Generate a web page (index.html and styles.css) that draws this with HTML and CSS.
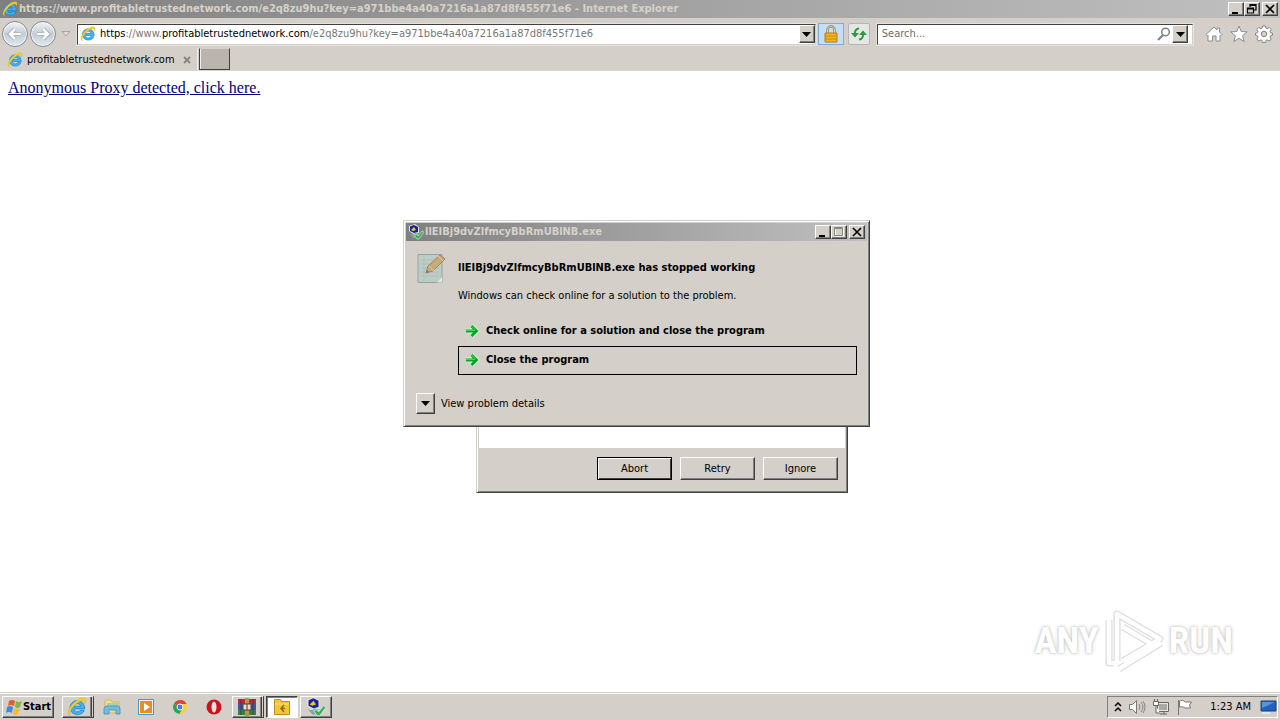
FILE: index.html
```html
<!DOCTYPE html>
<html lang="en">
<head>
<meta charset="utf-8">
<title>Internet Explorer</title>
<link rel="stylesheet" href="styles.css">
</head>
<body>
<svg class="defs" aria-hidden="true">
  <symbol id="ie" viewBox="0 0 16 16">
    <path d="M14.200 9.500H5.500c.2 2.900 4 3 5.200 1.100h3.100c-1.600 5.200-11.200 4.700-11.300-1.900C2.400 1 14.200.6 14.200 9.500ZM5.500 7.300h5.400C10.500 4.700 6 4.500 5.500 7.300Z" fill="#45b0ea" stroke="#1683cb" stroke-width=".6"/>
    <path d="M2.500 14.800C-.8 14 1.600 7.500 6.800 3.500 10.200.8 14.500-.3 15 2.100c.2.900-.2 2-.8 3 .2-2-.9-2.900-3.700-1.700C6 5.300.7 12 2.500 14.800Z" fill="#f6cf25" stroke="#d9a912" stroke-width=".3"/>
  </symbol>
  <symbol id="app" viewBox="0 0 16 16">
    <path d="M1 2 7 0l4 3v6l-6 1-4-3Z" fill="#dfe5e8"/>
    <path d="M2 2.500 6 1l4 2v5L6 9 2 7Z" fill="#17238f"/>
    <path d="m6 3 2 3-3 1-2-1Z" fill="#eec53a"/>
    <path d="M1 9q3 3 6 0l3 1-2 4H5Z" fill="#7ea3ab"/>
    <path d="m6 11 3-1 1 2 4-5 2 1-5 7H9Z" fill="#3fae58" stroke="#c6ead0" stroke-width=".7"/>
  </symbol>
  <symbol id="go" viewBox="0 0 16 16">
    <path d="M2 8h10M7.500 3l5 5-5 5" fill="none" stroke="#cdf3cd" stroke-width="5"/>
    <path d="M2 8h10M7.500 3l5 5-5 5" fill="none" stroke="#0da32a" stroke-width="2.800"/>
    <path d="M2 7.500h9M7.500 3l4 4" fill="none" stroke="#3fd950"/>
  </symbol>
  <symbol id="min" viewBox="0 0 12 10"><path d="M2 8h6v2H2z"/></symbol>
  <symbol id="close" viewBox="0 0 12 10"><path d="m2 1 8 8M10 1 2 9" stroke="#000" stroke-width="1.700"/></symbol>
  <symbol id="down" viewBox="0 0 9 5"><path d="M0 0h9L4.500 5Z"/></symbol>
</svg>

<header class="browser">
  <div class="titlebar">
    <svg class="icon16"><use href="#ie"/></svg>
    <h1 class="caption">https://www.profitabletrustednetwork.com/e2q8zu9hu?key=a971bbe4a40a7216a1a87d8f455f71e6 - Internet Explorer</h1>
    <div class="window-buttons">
      <button class="wbtn" aria-label="Minimize"><svg><use href="#min"/></svg></button>
      <button class="wbtn" aria-label="Restore"><svg viewBox="0 0 12 10"><path d="M4 3V.5h6V6H8M4 1.500h6M1.500 4h6v5h-6ZM1.500 5h6" fill="none" stroke="#000" stroke-width="1.200"/></svg></button>
      <button class="wbtn apart" aria-label="Close"><svg><use href="#close"/></svg></button>
    </div>
  </div>
  <nav class="toolbar">
    <div class="history">
      <button class="round" aria-label="Back"><svg viewBox="0 0 24 24"><path d="M19 12H6m6-6-6 6 6 6" fill="none" stroke="#9aa3ab" stroke-width="5"/><path d="M19 12H6m6-6-6 6 6 6" fill="none" stroke="#fff" stroke-width="3"/></svg></button>
      <button class="round" aria-label="Forward"><svg viewBox="0 0 24 24"><path d="M5 12h13m-6-6 6 6-6 6" fill="none" stroke="#9aa3ab" stroke-width="5"/><path d="M5 12h13m-6-6 6 6-6 6" fill="none" stroke="#fff" stroke-width="3"/></svg></button>
      <button class="recent" aria-label="Recent pages"><svg viewBox="0 0 10 6"><path d="M1 .5h8L5 5Z" fill="#dedad5" stroke="#aaa6a0"/></svg></button>
    </div>
    <div class="field address">
      <svg class="icon16"><use href="#ie"/></svg>
      <div class="url" role="textbox" aria-label="Address" contenteditable="true" spellcheck="false"><b>https</b>://www.<b>profitabletrustednetwork.com</b>/e2q8zu9hu?key=a971bbe4a40a7216a1a87d8f455f71e6</div>
      <button class="drop" aria-label="Show addresses"><svg><use href="#down"/></svg></button>
    </div>
    <button class="tool lock" aria-label="Security report"><svg viewBox="0 0 16 18"><path d="M4.500 9V5a3.500 3.500 0 0 1 7 0v4" fill="none" stroke="#8d8257" stroke-width="2.400"/><path d="M4.500 9V5a3.500 3.500 0 0 1 7 0v4" fill="none" stroke="#ddd6a8"/><path d="M2 8h12v9H2z" fill="#efb51c" stroke="#b67c12"/><path d="M2 11h12M2 14h12" stroke="#c98c13"/></svg></button>
    <button class="tool refresh" aria-label="Refresh"><svg viewBox="0 0 16 16"><path d="M0 7h8L4 11.500ZM8 9h8l-4-4.500Z" fill="#2b9b3b"/><path d="M4 7q0-4 4-4.500M12 9q0 4-4 4.500" fill="none" stroke="#2b9b3b" stroke-width="2"/></svg></button>
    <div class="field search">
      <input class="query" type="text" aria-label="Search" placeholder="Search...">
      <button class="glass" aria-label="Search"><svg viewBox="0 0 14 14"><circle cx="8.500" cy="5" r="3.800" fill="none" stroke="#7e838a" stroke-width="1.500"/><path d="m6 8-5 5" stroke="#7e838a" stroke-width="2.200"/></svg></button>
      <button class="drop" aria-label="Search options"><svg><use href="#down"/></svg></button>
    </div>
    <div class="commands">
      <button class="plain" aria-label="Home"><svg viewBox="0 0 18 18"><path d="m9 2 3 3V3h2.500v4L17 9.500 15.500 11 15 10.500V16h-4v-5H7.500v5H3v-5.500l-.5.500L1 9.500Z" fill="#fff" stroke="#8d8d8d"/></svg></button>
      <button class="plain" aria-label="Favorites"><svg viewBox="0 0 18 18"><path d="m9 1 2.200 5.500 6 .4-4.600 3.800 1.500 5.800L9 13.300l-5.100 3.200 1.500-5.800L.8 6.900l6-.4Z" fill="#fff" stroke="#8d8d8d"/></svg></button>
      <button class="plain" aria-label="Tools"><svg viewBox="0 0 18 18"><path d="M7.500 1h3l.5 2.200 1.200.5 2-1.200 2 2-1.200 2 .5 1.200 2 .5v2l-2 .7-.5 1.200 1.200 2-2 2-2-1.200-1.200.5-.5 2h-3l-.5-2-1.200-.5-2 1.200-2-2 1.200-2-.5-1.200-2-.7v-2l2-.5.5-1.200-1.200-2 2-2 2 1.200L7 3.200Z" fill="#fff" stroke="#858585"/><circle cx="9" cy="9" r="2.700" fill="#d4d0c8" stroke="#858585"/></svg></button>
    </div>
  </nav>
  <div class="tabs">
    <div class="tab">
      <svg class="icon16"><use href="#ie"/></svg>
      <span class="tab-name">profitabletrustednetwork.com</span>
      <button class="tab-close" aria-label="Close tab"><svg viewBox="0 0 8 8"><path d="m1 1 6 6M7 1 1 7" stroke="#858585" stroke-width="1.800"/></svg></button>
    </div>
    <button class="new-tab" aria-label="New tab"></button>
  </div>
</header>

<main class="page">
  <a class="proxy" href="#">Anonymous Proxy detected, click here.</a>
</main>

<section class="window prompt" aria-label="Prompt">
  <div class="prompt-body"></div>
  <div class="prompt-actions">
    <button class="push default">Abort</button>
    <button class="push">Retry</button>
    <button class="push">Ignore</button>
  </div>
</section>

<section class="window crash" role="dialog" aria-labelledby="crash-title">
  <div class="titlebar">
    <svg class="icon16"><use href="#app"/></svg>
    <h2 class="caption" id="crash-title">llEIBj9dvZlfmcyBbRmUBlNB.exe</h2>
    <div class="window-buttons">
      <button class="wbtn" aria-label="Minimize"><svg><use href="#min"/></svg></button>
      <button class="wbtn" aria-label="Maximize" disabled><svg viewBox="0 0 12 10"><path d="M2.500 1h8v8h-8Z" fill="none" stroke="#fff"/><path d="M1.500.5h8v8h-8ZM1.500 1.500h8" fill="none" stroke="#85897e"/></svg></button>
      <button class="wbtn apart" aria-label="Close"><svg><use href="#close"/></svg></button>
    </div>
  </div>
  <div class="crash-body">
    <svg class="note" viewBox="0 0 30 32"><path d="M1 2.500h24v28H1Z" fill="#bdccc5" stroke="#93a69e"/><path d="M4 8h18M4 12h18M4 16h18M4 20h18M4 24h18M7 4v25" stroke="#acbdb6" stroke-width=".7"/><path d="M20 30.500 25 25v5.500Z" fill="#dfe5df"/><path d="m9 21 2-7L23 3l5 4-12 12Z" fill="#c8aa78" stroke="#9a8765"/><path d="m12 14 5 5M21 4l5 5" stroke="#e1c99c"/><path d="m9 21 1-3 2 2Z" fill="#6f7168"/></svg>
    <div class="message">
      <p class="headline">llEIBj9dvZlfmcyBbRmUBlNB.exe has stopped working</p>
      <p class="detail">Windows can check online for a solution to the problem.</p>
      <button class="choice"><svg class="icon16"><use href="#go"/></svg>Check online for a solution and close the program</button>
      <button class="choice focused"><svg class="icon16"><use href="#go"/></svg>Close the program</button>
    </div>
  </div>
  <div class="expander">
    <button class="expand" id="expand" aria-label="View problem details"><svg><use href="#down"/></svg></button>
    <label for="expand">View problem details</label>
  </div>
</section>

<div class="watermark">
  <span>ANY</span>
  <svg viewBox="0 0 62 64"><g fill="none" stroke-linejoin="round"><path d="M14 52V5l43 25-37 22M6 11v43h5M16 60l42-26M20 18l32 19" stroke="#dcdcdc" stroke-width="7"/><path d="M14 52V5l43 25-37 22M6 11v43h5M16 60l42-26M20 18l32 19" stroke="#fff" stroke-width="4.500"/></g></svg>
  <span>RUN</span>
</div>

<footer class="taskbar">
  <button class="start"><svg viewBox="0 0 18 16"><path d="M4 2q3-2 6 0L9 7Q6 5 3 7Z" fill="#ea5a2b"/><path d="M11 2q3 2 6 0l-2 6q-3 2-5 0Z" fill="#7dbb3c"/><path d="M2 8q3-2 6 0l-1 6Q4 12 1 14Z" fill="#3c8cdc"/><path d="M9 9q3 2 6 0l-2 6q-3 2-5 0Z" fill="#f4bd2c"/></svg>Start</button>
  <div class="tasks">
    <button class="task raised stack" aria-label="Internet Explorer"><svg class="icon16"><use href="#ie"/></svg></button>
    <button class="task" aria-label="Windows Explorer"><svg viewBox="0 0 20 20"><path d="M3 3h6l1 2h7v11H3Z" fill="#f5df8b" stroke="#d3b75e"/><path d="M5 6h11v3H5Z" fill="#9ed4ae"/><path d="M2 17v-5q0-3 3-3h11q2 0 2 3v5h-4v-4H7v4Z" fill="#78b9df" stroke="#5797bd"/></svg></button>
    <button class="task" aria-label="Media Player"><svg viewBox="0 0 20 20"><path d="M2.500 2.500h15v15h-15Z" fill="#e8f3fb" stroke="#4797cf"/><path d="M4 4h12v12H4Z" fill="#f08a1d"/><path d="m8 6 6 4-6 4Z" fill="#fff"/></svg></button>
    <button class="task" aria-label="Chrome"><svg viewBox="0 0 20 20"><path d="M10 10 4 6.500A7 7 0 0 1 16.500 7H10Z" fill="#dd4438"/><path d="M10 10 4 6.500A7 7 0 0 0 9.500 17l3.500-6Z" fill="#2da354"/><path d="M10 7h6.500A7 7 0 0 1 9.500 17l3.500-6Z" fill="#f8cf3c"/><circle cx="10" cy="10" r="3" fill="#4382de" stroke="#fff"/></svg></button>
    <button class="task" aria-label="Opera"><svg viewBox="0 0 20 20"><circle cx="10" cy="10" r="7.500" fill="#c8141d"/><ellipse cx="10" cy="10" rx="2.500" ry="5.500" fill="#f3dedc"/></svg></button>
    <button class="task raised stack" aria-label="WinRAR"><svg viewBox="0 0 20 20"><path d="M1 2h18v5H1Z" fill="#bb293b"/><path d="M1 7h18v6H1Z" fill="#375cad"/><path d="M1 13h18v5H1Z" fill="#2d883d"/><path d="M8 1h4v18H8Z" fill="#b9934a"/><path d="M6 7h8v6H6Z" fill="#e6dfd3" stroke="#593c32"/><path d="M10 7v6M4 2v16M16 2v16" stroke="#523442"/></svg></button>
    <button class="task raised pressed" aria-label="Folder"><svg viewBox="0 0 20 20"><path d="M2.500 2.500h6l1 2h8v13h-15Z" fill="#f3c638" stroke="#ba8d1e"/><path d="M3 7h14" stroke="#fce184"/><path d="m12 8-3 3.500 3 3.500M9 11.500h4" fill="none" stroke="#936714" stroke-width="1.500"/></svg></button>
    <button class="task raised" aria-label="llEIBj9dvZlfmcyBbRmUBlNB.exe"><svg class="icon16"><use href="#app"/></svg></button>
  </div>
  <div class="tray">
    <button class="plain chevrons" aria-label="Show hidden icons"><svg viewBox="0 0 8 10"><path d="m1 4 3-3 3 3M1 9l3-3 3 3" fill="none" stroke="#000" stroke-width="1.500"/></svg></button>
    <button class="plain" aria-label="Volume"><svg viewBox="0 0 18 18"><path d="M1.500 6.500h3l4-4v13l-4-4h-3Z" fill="#f8f8f5" stroke="#777"/><path d="M11 6q2 3 0 6m2-8q4 5 0 10m2-11q4 6 0 12" fill="none" stroke="#858585"/></svg></button>
    <button class="plain" aria-label="Network"><svg viewBox="0 0 18 18"><path d="M5.500 4.500h11v9h-11ZM8 16h7m-3-3v3" fill="#e9e9e4" stroke="#666"/><path d="M7 6h8v6H7Z" fill="#aaa9a3"/><path d="M1.500 3.500h5v4h-5ZM2.500 1v3m3-3v3M4 8v7h4" fill="#fff" stroke="#666"/></svg></button>
    <button class="plain" aria-label="Action Center"><svg viewBox="0 0 18 18"><path d="M2.500 2v15" stroke="#777"/><path d="M3.500 3q3-2 6 1h6l-2 3 1 3H9Q7 8 3.500 9Z" fill="#fff" stroke="#777"/></svg></button>
    <time class="clock">1:23 AM</time>
    <button class="plain" aria-label="Show desktop"><svg viewBox="0 0 18 18"><path d="M2 3h15v10H2Z" fill="#2162bd" stroke="#1a4278"/><path d="M3 4h13L3 10Z" fill="#5796dc"/><path d="M3 15h8" stroke="#dce9f6" stroke-width="2"/></svg></button>
  </div>
</footer>
</body>
</html>
```
FILE: styles.css
```css
* { box-sizing: border-box; }

body {
  margin: 0;
  min-height: 100vh;
  display: flex;
  flex-direction: column;
  background: #fff;
  color: #000;
  font: 11px/14px "DejaVu Sans Condensed", "DejaVu Sans", sans-serif;
  overflow: hidden;
}

button, input { font: inherit; color: inherit; padding: 0; margin: 0; border: 0; background: none; }
button { display: flex; align-items: center; justify-content: center; flex: none; }
svg { display: block; flex: none; }
h1, h2, p { margin: 0; font: inherit; }
.defs { position: absolute; width: 0; height: 0; }

.titlebar {
  display: flex;
  align-items: center;
  gap: 1px;
  height: 18px;
  padding: 0 2px;
  background: linear-gradient(90deg, #808080, #c0c0c0);
}
.caption { flex: 1; min-width: 0; color: #d6d2ca; font-weight: bold; white-space: nowrap; overflow: hidden; }
.window-buttons { display: flex; }
.wbtn, .drop, .expand {
  background: #d4d0c8;
  border: 1px solid;
  border-color: #fff #404040 #404040 #fff;
  box-shadow: inset -1px -1px #808080;
}
.wbtn { width: 16px; height: 14px; }
.wbtn svg { width: 12px; height: 10px; }
.apart { margin-left: 2px; }

.browser { background: #d5cfc9; }
.toolbar { display: flex; align-items: center; height: 30px; padding: 2px 7px 0 2px; }
.history { display: flex; align-items: center; width: 75px; gap: 2px; }
.round {
  width: 26px;
  height: 26px;
  border-radius: 50%;
  border: 1px solid #84898f;
  background: linear-gradient(#f1f4f6, #c4cdd5 50%, #dfe9f2);
  box-shadow: inset 0 0 0 1px #f8fafb;
}
.round svg { width: 20px; height: 20px; }
.recent { width: 16px; height: 16px; }
.recent svg { width: 10px; height: 6px; }

.field {
  display: flex;
  align-items: center;
  height: 21px;
  background: #fff;
  border: 1px solid;
  border-color: #404040 #d4d0c8 #d4d0c8 #404040;
  outline: 1px solid #e6e3de;
}
.address { flex: 72 1 0; gap: 4px; padding-left: 2px; }
.url { flex: 1; min-width: 0; color: #777; white-space: nowrap; overflow: hidden; outline: 0; }
.url b { color: #000; font-weight: normal; }
.drop { width: 16px; height: 18px; }
.drop svg, .expand svg { width: 9px; height: 5px; }
.tool { height: 22px; border: 1px solid #b5b5b5; }
.lock { width: 26px; margin: 0 4px 0 2px; background: #c5ddf7; border-color: #7eadd9; }
.lock svg { width: 16px; height: 18px; }
.refresh { width: 22px; margin-right: 7px; background: #e4e6e8; border-radius: 2px; }
.refresh svg { width: 16px; height: 16px; }
.search { flex: 30 1 0; padding: 0 4px; }
.query { flex: 1; min-width: 0; outline: 0; }
.query::placeholder { color: #6d6d6d; opacity: 1; }
.glass { width: 17px; }
.glass svg { width: 14px; height: 14px; }
.commands { display: flex; gap: 7px; margin-left: 12px; }
.plain svg { width: 18px; height: 18px; }

.tabs { display: flex; height: 23px; border-bottom: 1px solid #d8d5cc; }
.tab { display: flex; align-items: center; width: 198px; padding: 2px 6px 0 7px; gap: 4px; border-right: 1px solid #f0eeea; }
.tab-name { flex: 1; white-space: nowrap; }
.tab-close svg { width: 8px; height: 8px; }
.new-tab {
  width: 31px;
  margin-left: 1px;
  background: #bbb3ae;
  border: 1px solid #404040;
  border-top-color: #d4d0c8;
  box-shadow: inset 1px 0 #eee;
}

.icon16 { width: 16px; height: 16px; }

.page { flex: 1; padding: 8px; font: 16px/18px "Liberation Serif", serif; }
.proxy { color: #00007f; }

.window {
  position: absolute;
  background: #d4cfc8;
  border: 1px solid;
  border-color: #d4d0c8 #404040 #404040 #d4d0c8;
  box-shadow: inset 1px 1px #fff, inset -1px -1px #808080;
}
.prompt { left: 476px; top: 300px; width: 372px; padding: 3px 2px; }
.prompt-body { height: 144px; background: #fff; }
.prompt-actions { display: flex; justify-content: flex-end; gap: 8px; padding: 9px 7px; }
.push {
  width: 75px;
  height: 23px;
  background: #d4cfc8;
  border: 1px solid;
  border-color: #fff #404040 #404040 #fff;
  box-shadow: inset -1px -1px #808080;
}
.default { border-color: #000; box-shadow: inset 1px 1px #fff, inset -1px -1px #404040; }

.crash { left: 403px; top: 220px; width: 467px; padding: 2px; }
.crash-body { display: flex; gap: 11px; padding: 11px 10px 0 11px; }
.note { width: 30px; height: 32px; }
.message { flex: 1; min-width: 0; }
.headline { margin-top: 9px; font-weight: bold; white-space: nowrap; }
.detail { margin: 14px 0 13px; white-space: nowrap; }
.choice {
  width: 100%;
  height: 29px;
  padding-left: 5px;
  gap: 6px;
  justify-content: flex-start;
  border: 1px solid transparent;
  font-weight: bold;
  white-space: nowrap;
}
.focused { margin-top: 1px; padding-bottom: 2px; border-color: #000; }
.expander { display: flex; align-items: center; gap: 6px; padding: 18px 10px 10px; }
.expand { width: 19px; height: 21px; }

.watermark {
  position: absolute;
  right: 47px;
  bottom: 46px;
  display: flex;
  align-items: center;
  gap: 4px;
  height: 66px;
  color: #fff;
  font: bold 37px/40px "Liberation Sans Narrow", "Roboto Condensed", Roboto, sans-serif;
  text-shadow: 0 0 2px #bbb, 0 0 4px #ccc;
}
.watermark svg { width: 62px; height: 64px; }

.taskbar {
  display: flex;
  align-items: center;
  height: 28px;
  padding: 0 2px;
  background: #d5cfc9;
  border-top: 1px solid #d5cfc9;
  box-shadow: inset 0 1px #fff;
}
.start, .raised {
  border: 1px solid;
  border-color: #fff #404040 #404040 #fff;
  box-shadow: inset -1px -1px #808080;
}
.start { height: 22px; width: 52px; font-weight: bold; }
.start svg { width: 18px; height: 16px; }
.tasks { display: flex; flex: 1; padding-left: 8px; gap: 2px; }
.task { width: 32px; height: 22px; }
.task svg { width: 20px; height: 20px; }
.stack { border-right: 3px double #404040; }
.pressed { background: #fff; border-color: #404040 #fff #fff #404040; box-shadow: inset 1px 1px #808080; }
.tray {
  display: flex;
  align-items: center;
  gap: 6px;
  height: 22px;
  padding: 0 0 0 6px;
  border: 1px solid;
  border-color: #808080 #fff #fff #808080;
}
.chevrons svg { width: 8px; height: 10px; }
.clock { padding: 0 2px 0 10px; white-space: nowrap; }
```
